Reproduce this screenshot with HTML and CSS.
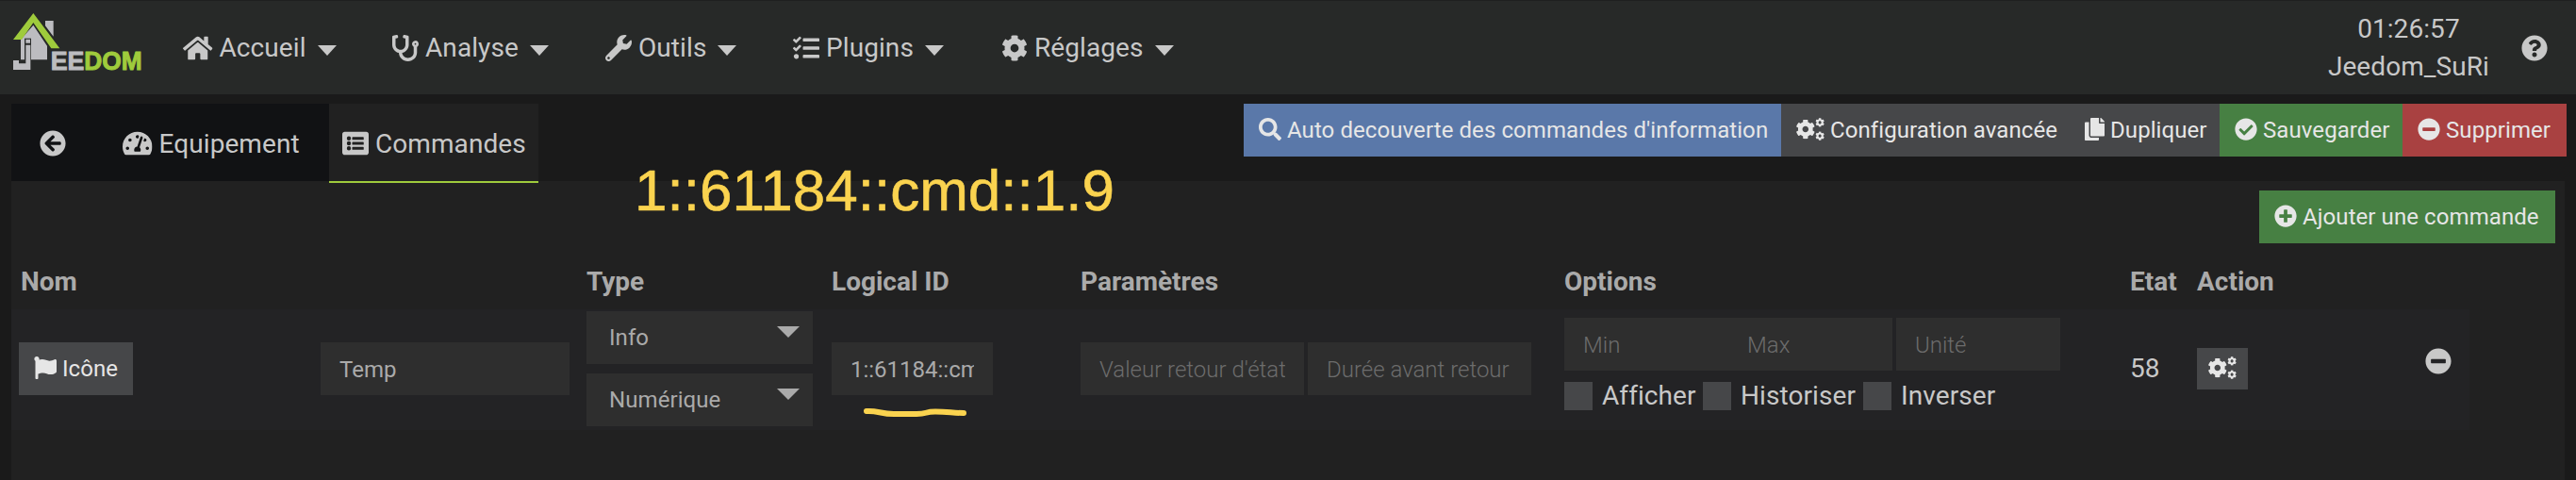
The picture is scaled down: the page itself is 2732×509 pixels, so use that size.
FILE: index.html
```
<!DOCTYPE html>
<html lang="fr">
<head>
    <meta charset="UTF-8">
    <meta name="viewport" content="width=device-width, initial-scale=1.0">
    <title>Jeedom - Commandes</title>
    <link rel="stylesheet" href="styles.css">
</head>
<body>
    <!-- icons -->
    <svg class="sprite" width="0" height="0">
        <symbol id="home" viewBox="0 0 576 512"><path d="M280.37 148.26L96 300.11V464a16 16 0 0 0 16 16l112.06-.29a16 16 0 0 0 15.92-16V368a16 16 0 0 1 16-16h64a16 16 0 0 1 16 16v95.64a16 16 0 0 0 16 16.05L464 480a16 16 0 0 0 16-16V300L295.67 148.26a12.19 12.19 0 0 0-15.3 0zM571.6 251.47L488 182.56V44.05a12 12 0 0 0-12-12h-56a12 12 0 0 0-12 12v72.61L318.47 43a48 48 0 0 0-61 0L4.34 251.47a12 12 0 0 0-1.6 16.9l25.5 31A12 12 0 0 0 45.15 301l235.22-193.74a12.19 12.19 0 0 1 15.3 0L530.9 301a12 12 0 0 0 16.9-1.6l25.5-31a12 12 0 0 0-1.7-16.93z"/></symbol>
        <symbol id="stethoscope" viewBox="0 0 512 512"><path d="M447.1 112c-34.2.5-62.3 28.4-63 62.6-.5 24.3 12.5 45.6 32 56.8V344c0 57.3-50.2 104-112 104-60 0-109.2-44.1-111.9-99.2C265 333.8 320 269.2 320 192V36.6c0-11.4-8.1-21.3-19.3-23.5L237.8.5c-13-2.6-25.6 5.8-28.2 18.8L206.4 35c-2.6 13 5.8 25.6 18.8 28.2l30.7 6.1v121.4c0 52.9-42.2 96.7-95.1 97.2-53.4.5-96.9-42.7-96.9-96V69.4l30.7-6.1c13-2.6 21.4-15.2 18.8-28.2l-3.1-15.7C107.7 6.4 95.1-2 82.1.6L19.3 13C8.1 15.3 0 25.1 0 36.6V192c0 77.3 55.1 142 128.1 156.8C130.7 439.2 208.6 512 304 512c97 0 176-75.4 176-168V231.4c19.1-11.1 32-31.7 32-55.4 0-35.7-29.2-64.5-64.9-64zm.9 80c-8.8 0-16-7.2-16-16s7.2-16 16-16 16 7.2 16 16-7.2 16-16 16z"/></symbol>
        <symbol id="wrench" viewBox="0 0 512 512"><path d="M507.73 109.1c-2.24-9.03-13.54-12.09-20.12-5.51l-74.36 74.36-67.88-11.31-11.31-67.88 74.36-74.36c6.62-6.62 3.43-17.9-5.66-20.16-47.38-11.74-99.55.91-136.58 37.93-39.64 39.64-50.55 97.1-34.05 147.2L18.74 402.76c-24.99 24.99-24.99 65.51 0 90.5 24.99 24.99 65.51 24.99 90.5 0l213.21-213.21c50.12 16.71 107.47 5.68 147.37-34.22 37.07-37.07 49.7-89.32 37.91-136.73zM64 472c-13.25 0-24-10.75-24-24 0-13.26 10.75-24 24-24s24 10.74 24 24c0 13.25-10.75 24-24 24z"/></symbol>
        <symbol id="tasks" viewBox="0 0 512 512"><path d="M139.61 35.5a12 12 0 0 0-17 0L58.93 98.81l-22.7-22.12a12 12 0 0 0-17 0L3.53 92.41a12 12 0 0 0 0 17l47.59 47.4a12.78 12.78 0 0 0 17.61 0l15.59-15.62L156.52 69a12.09 12.09 0 0 0 .09-17zm0 159.19a12 12 0 0 0-17 0l-63.68 63.72-22.7-22.1a12 12 0 0 0-17 0L3.53 252a12 12 0 0 0 0 17L51 316.5a12.77 12.77 0 0 0 17.6 0l15.7-15.69 72.2-72.22a12 12 0 0 0 .09-16.9zM64 368c-26.49 0-48.59 21.5-48.59 48S37.53 464 64 464a48 48 0 0 0 0-96zm432 16H208a16 16 0 0 0-16 16v32a16 16 0 0 0 16 16h288a16 16 0 0 0 16-16v-32a16 16 0 0 0-16-16zm0-320H208a16 16 0 0 0-16 16v32a16 16 0 0 0 16 16h288a16 16 0 0 0 16-16V80a16 16 0 0 0-16-16zm0 160H208a16 16 0 0 0-16 16v32a16 16 0 0 0 16 16h288a16 16 0 0 0 16-16v-32a16 16 0 0 0-16-16z"/></symbol>
        <symbol id="cog" viewBox="0 0 512 512"><path d="M487.4 315.7l-42.6-24.6c4.3-23.2 4.3-47 0-70.2l42.6-24.6c4.9-2.8 7.1-8.6 5.5-14-11.1-35.6-30-67.8-54.7-94.6-3.8-4.1-10-5.1-14.8-2.3L380.8 110c-17.9-15.4-38.5-27.3-60.8-35.1V25.8c0-5.6-3.9-10.5-9.4-11.7-36.7-8.2-74.3-7.8-109.2 0-5.5 1.2-9.4 6.1-9.4 11.7V75c-22.2 7.9-42.8 19.8-60.8 35.1L88.7 85.5c-4.9-2.8-11-1.9-14.8 2.3-24.7 26.7-43.6 58.9-54.7 94.6-1.7 5.4.6 11.2 5.5 14L67.3 221c-4.3 23.2-4.3 47 0 70.2l-42.6 24.6c-4.9 2.8-7.1 8.6-5.5 14 11.1 35.6 30 67.8 54.7 94.6 3.8 4.1 10 5.1 14.8 2.3l42.6-24.6c17.9 15.4 38.5 27.3 60.8 35.1v49.2c0 5.6 3.9 10.5 9.4 11.7 36.7 8.2 74.3 7.8 109.2 0 5.5-1.2 9.4-6.1 9.4-11.7v-49.2c22.2-7.9 42.8-19.8 60.8-35.1l42.6 24.6c4.9 2.8 11 1.9 14.8-2.3 24.7-26.7 43.6-58.9 54.7-94.6 1.5-5.5-.7-11.3-5.6-14.1zM256 336c-44.1 0-80-35.9-80-80s35.9-80 80-80 80 35.9 80 80-35.9 80-80 80z"/></symbol>
        <symbol id="cogs" viewBox="0 0 640 512"><use href="#cog" x="-14" y="33" width="446" height="446"/><use href="#cog" x="432" y="0" width="208" height="208"/><use href="#cog" x="432" y="304" width="208" height="208"/></symbol>
        <symbol id="question" viewBox="0 0 512 512"><path d="M504 256c0 136.997-111.043 248-248 248S8 392.997 8 256C8 119.083 119.043 8 256 8s248 111.083 248 248zM262.655 90c-54.497 0-89.255 22.957-116.549 63.758-3.536 5.286-2.353 12.415 2.715 16.258l34.699 26.31c5.205 3.947 12.621 3.008 16.665-2.122 17.864-22.658 30.113-35.797 57.303-35.797 20.429 0 45.698 13.148 45.698 32.958 0 14.976-12.363 22.667-32.534 33.976C247.128 238.528 216 254.941 216 296v4c0 6.627 5.373 12 12 12h56c6.627 0 12-5.373 12-12v-1.333c0-28.462 83.186-29.647 83.186-106.667 0-58.002-60.165-102-116.531-102zM256 338c-25.365 0-46 20.635-46 46 0 25.364 20.635 46 46 46s46-20.636 46-46c0-25.365-20.635-46-46-46z"/></symbol>
        <symbol id="arrow-left" viewBox="0 0 512 512"><path d="M256 504C119 504 8 393 8 256S119 8 256 8s248 111 248 248-111 248-248 248zm28.9-143.6L209.4 288H392c13.3 0 24-10.7 24-24v-16c0-13.3-10.7-24-24-24H209.4l75.5-72.4c9.7-9.3 9.9-24.8.4-34.3l-11-10.9c-9.4-9.4-24.6-9.4-33.9 0L107.7 239c-9.4 9.4-9.4 24.6 0 33.9l132.7 132.7c9.4 9.4 24.6 9.4 33.9 0l11-10.9c9.5-9.5 9.3-25-.4-34.3z"/></symbol>
        <symbol id="tachometer" viewBox="0 0 576 512"><path d="M288 32C128.94 32 0 160.94 0 320c0 52.8 14.25 102.26 39.06 144.8 5.61 9.62 16.3 15.2 27.44 15.2h443c11.14 0 21.83-5.58 27.44-15.2C561.75 422.26 576 372.8 576 320c0-159.06-128.94-288-288-288zm0 64c14.71 0 26.58 10.13 30.32 23.65-1.11 2.26-2.64 4.23-3.45 6.67l-9.22 27.67c-5.13 3.49-10.97 6.01-17.64 6.01-17.67 0-32-14.33-32-32S270.33 96 288 96zM96 384c-17.67 0-32-14.33-32-32s14.33-32 32-32 32 14.33 32 32-14.33 32-32 32zm48-160c-17.67 0-32-14.33-32-32s14.33-32 32-32 32 14.33 32 32-14.33 32-32 32zm246.77-72.41l-61.33 184C343.13 347.33 352 364.54 352 384c0 11.72-3.38 22.55-8.88 32H232.88c-5.5-9.45-8.88-20.28-8.88-32 0-33.94 26.5-61.43 59.9-63.59l61.34-184.01c4.17-12.56 17.73-19.45 30.36-15.17 12.57 4.19 19.35 17.79 15.17 30.36zm14.66 57.2l15.52-46.55c3.47-1.29 7.13-2.23 11.05-2.23 17.67 0 32 14.33 32 32s-14.33 32-32 32c-11.38-.01-20.89-6.28-26.57-15.22zM480 384c-17.67 0-32-14.33-32-32s14.33-32 32-32 32 14.33 32 32-14.33 32-32 32z"/></symbol>
        <symbol id="list-alt" viewBox="0 0 512 512"><path fill-rule="evenodd" d="M464 480H48c-26.51 0-48-21.49-48-48V80c0-26.51 21.49-48 48-48h416c26.51 0 48 21.49 48 48v352c0 26.51-21.49 48-48 48zM128 120a40 40 0 1 0 0 80 40 40 0 1 0 0-80zM128 216a40 40 0 1 0 0 80 40 40 0 1 0 0-80zM128 312a40 40 0 1 0 0 80 40 40 0 1 0 0-80zM204 132h200q12 0 12 12v32q0 12-12 12H204q-12 0-12-12v-32q0-12 12-12zM204 228h200q12 0 12 12v32q0 12-12 12H204q-12 0-12-12v-32q0-12 12-12zM204 324h200q12 0 12 12v32q0 12-12 12H204q-12 0-12-12v-32q0-12 12-12z"/></symbol>
        <symbol id="search" viewBox="0 0 512 512"><path d="M505 442.7L405.3 343c-4.5-4.5-10.6-7-17-7H372c27.6-35.3 44-79.7 44-128C416 93.1 322.9 0 208 0S0 93.1 0 208s93.1 208 208 208c48.3 0 92.7-16.4 128-44v16.3c0 6.4 2.5 12.5 7 17l99.7 99.7c9.4 9.4 24.6 9.4 33.9 0l28.3-28.3c9.4-9.4 9.4-24.6.1-34zM208 336c-70.7 0-128-57.2-128-128 0-70.7 57.2-128 128-128 70.7 0 128 57.2 128 128 0 70.7-57.2 128-128 128z"/></symbol>
        <symbol id="copy" viewBox="0 0 448 512"><path d="M320 448v40c0 13.255-10.745 24-24 24H24c-13.255 0-24-10.745-24-24V120c0-13.255 10.745-24 24-24h72v296c0 30.879 25.121 56 56 56h168zm0-344V0H152c-13.255 0-24 10.745-24 24v368c0 13.255 10.745 24 24 24h272c13.255 0 24-10.745 24-24V128H344c-13.2 0-24-10.8-24-24zm120.971-31.029L375.029 7.029A24 24 0 0 0 358.059 0H352v96h96v-6.059a24 24 0 0 0-7.029-16.97z"/></symbol>
        <symbol id="check" viewBox="0 0 512 512"><path d="M504 256c0 136.967-111.033 248-248 248S8 392.967 8 256 119.033 8 256 8s248 111.033 248 248zM227.314 387.314l184-184c6.248-6.248 6.248-16.379 0-22.627l-22.627-22.627c-6.248-6.249-16.379-6.249-22.628 0L216 308.118l-70.059-70.059c-6.248-6.248-16.379-6.248-22.628 0l-22.627 22.627c-6.248 6.248-6.248 16.379 0 22.627l104 104c6.249 6.249 16.379 6.249 22.628.001z"/></symbol>
        <symbol id="minus" viewBox="0 0 512 512"><path d="M256 8C119 8 8 119 8 256s111 248 248 248 248-111 248-248S393 8 256 8zM124 296c-6.6 0-12-5.4-12-12v-56c0-6.6 5.4-12 12-12h264c6.6 0 12 5.4 12 12v56c0 6.6-5.4 12-12 12H124z"/></symbol>
        <symbol id="plus" viewBox="0 0 512 512"><path d="M256 8C119 8 8 119 8 256s111 248 248 248 248-111 248-248S393 8 256 8zm144 276c0 6.6-5.4 12-12 12h-92v92c0 6.6-5.4 12-12 12h-56c-6.6 0-12-5.4-12-12v-92h-92c-6.6 0-12-5.4-12-12v-56c0-6.6 5.4-12 12-12h92v-92c0-6.6 5.4-12 12-12h56c6.6 0 12 5.4 12 12v92h92c6.6 0 12 5.4 12 12v56z"/></symbol>
        <symbol id="flag" viewBox="0 0 512 512"><path d="M349.565 98.783C295.978 98.783 251.721 64 184.348 64c-24.955 0-47.309 4.384-68.045 12.013a55.947 55.947 0 0 0 3.586-23.562C118.117 24.015 94.806 1.206 66.338.048 34.345-1.254 8 24.296 8 56c0 19.026 9.497 35.825 24 45.945V488c0 13.255 10.745 24 24 24h16c13.255 0 24-10.745 24-24v-94.4c28.311-12.064 63.582-22.122 114.435-22.122 53.588 0 97.844 34.783 165.217 34.783 48.169 0 86.667-16.294 122.505-40.858C506.84 359.452 512 349.571 512 339.045v-243.1c0-23.393-24.269-38.87-45.485-29.016-34.338 15.948-76.454 31.854-116.95 31.854z"/></symbol>
    </svg>

    <header class="navbar">
        <svg class="logo" viewBox="0 0 450 216">
            <path class="logo-gray" d="M120 42h26v50l-26-34zM82 56l44 66v44H42v-64z"/>
            <path class="logo-dark" d="M54 98h21v70H54z"/>
            <path class="logo-gray" d="M58 101h14v12H58zM58 119h15v79H18v-30h18v10h22z"/>
            <path class="logo-green" d="M82 18l84 112h-27L82 48l-37 54H18z"/>
            <text class="logo-gray" x="137" y="197" textLength="107" lengthAdjust="spacingAndGlyphs">EE</text>
            <text class="logo-green" x="244" y="197" textLength="184" lengthAdjust="spacingAndGlyphs">DOM</text>
        </svg>
        <nav class="menu">
            <a class="menu-accueil"><svg class="icon wide"><use href="#home"/></svg>Accueil<i class="caret"></i></a>
            <a class="menu-analyse"><svg class="icon"><use href="#stethoscope"/></svg>Analyse<i class="caret"></i></a>
            <a class="menu-outils"><svg class="icon"><use href="#wrench"/></svg>Outils<i class="caret"></i></a>
            <a class="menu-plugins"><svg class="icon"><use href="#tasks"/></svg>Plugins<i class="caret"></i></a>
            <a class="menu-reglages"><svg class="icon"><use href="#cog"/></svg>Réglages<i class="caret"></i></a>
        </nav>
        <div class="clock">
            <div>01:26:57</div>
            <div>Jeedom_SuRi</div>
        </div>
        <svg class="icon help"><use href="#question"/></svg>
    </header>

    <div class="toolbar">
        <div class="tabs">
            <a class="tab tab-back"><svg class="icon"><use href="#arrow-left"/></svg></a>
            <a class="tab tab-equip"><svg class="icon wide"><use href="#tachometer"/></svg>Equipement</a>
            <a class="tab tab-cmd active"><svg class="icon"><use href="#list-alt"/></svg>Commandes</a>
        </div>
        <div class="actions">
            <button class="btn btn-info"><svg class="icon"><use href="#search"/></svg>Auto decouverte des commandes d'information</button>
            <button class="btn btn-config"><svg class="icon cogs"><use href="#cogs"/></svg>Configuration avancée</button>
            <button class="btn btn-copy"><svg class="icon narrow"><use href="#copy"/></svg>Dupliquer</button>
            <button class="btn btn-save"><svg class="icon"><use href="#check"/></svg>Sauvegarder</button>
            <button class="btn btn-delete"><svg class="icon"><use href="#minus"/></svg>Supprimer</button>
        </div>
    </div>

    <main class="panel">
        <div class="add">
            <button class="btn btn-add"><svg class="icon"><use href="#plus"/></svg>Ajouter une commande</button>
        </div>
        <div class="row head">
            <div class="nom">Nom</div>
            <div>Type</div>
            <div>Logical ID</div>
            <div>Paramètres</div>
            <div>Options</div>
            <div>Etat</div>
            <div>Action</div>
        </div>
        <div class="row cmd">
            <div class="cell name">
                <button class="btn btn-icon"><svg class="icon"><use href="#flag"/></svg>Icône</button>
                <input class="field field-name" type="text" value="Temp">
            </div>
            <div class="types">
                <div class="select">Info<i class="caret"></i></div>
                <div class="select">Numérique<i class="caret"></i></div>
            </div>
            <div class="cell">
                <input class="field field-id" type="text" value="1::61184::cmd::1.9">
            </div>
            <div class="cell params">
                <input class="field" type="text" placeholder="Valeur retour d'état">
                <input class="field" type="text" placeholder="Durée avant retour">
            </div>
            <div class="options">
                <div class="limits">
                    <input class="field" type="text" placeholder="Min">
                    <input class="field" type="text" placeholder="Max">
                    <input class="field unit" type="text" placeholder="Unité">
                </div>
                <div class="checks">
                    <label class="check check-show"><i class="box"></i>Afficher</label>
                    <label class="check check-hist"><i class="box"></i>Historiser</label>
                    <label class="check"><i class="box"></i>Inverser</label>
                </div>
            </div>
            <div class="cell state">58</div>
            <div class="cell action">
                <button class="btn btn-cogs"><svg class="icon cogs"><use href="#cogs"/></svg></button>
                <svg class="icon remove"><use href="#minus"/></svg>
            </div>
        </div>
    </main>

    <!-- notes drawn over the page -->
    <div class="note">1::61184::cmd::1.9</div>
    <svg class="stroke" viewBox="0 0 112 18"><path d="M5 6C16 5 20 9 34 9h24c12 0 8-2.5 20-2.5 14 0 18 1.500 30 1.500"/></svg>
</body>
</html>
```
FILE: styles.css
```
* {
    box-sizing: border-box;
}

body {
    margin: 0;
    height: 509px;
    overflow: hidden;
    position: relative;
    background-color: #1a1a1a;
    color: #c8c8c8;
    font-family: Roboto, sans-serif;
    font-size: 28px;
    line-height: 40px;
    letter-spacing: .08px;
}

.sprite {
    position: absolute;
}

.icon {
    width: 1em;
    height: 1em;
    margin-right: .25em;
    fill: currentColor;
    flex: none;
}

.icon.wide {
    width: 1.125em;
}

.icon.narrow {
    width: .875em;
}

.icon.cogs {
    width: 1.25em;
}

.caret {
    border: 10px solid transparent;
    border-top: 11px solid currentColor;
    border-bottom: 0;
}

/* navbar */
.navbar {
    height: 100px;
    display: flex;
    align-items: center;
    background-color: #272928;
    border-top: 1px solid #1f2020;
}

.logo {
    width: 150px;
    height: 72px;
    margin: -13px 36px 0 8px;
    font-family: "Liberation Sans", Arial, sans-serif;
    font-weight: bold;
    font-size: 84px;
    letter-spacing: 0;
}

.logo text {
    stroke: currentColor;
    stroke-width: 3;
}

.logo-gray {
    fill: #bcbcc0;
    color: #bcbcc0;
}

.logo-green {
    fill: #9fcb3c;
    color: #9fcb3c;
}

.logo-dark {
    fill: #272928;
}

.menu {
    display: flex;
    flex: 1;
}

.menu a {
    display: flex;
    align-items: center;
}

.menu .caret {
    margin: 6px 0 0 12px;
}

.menu-accueil {
    width: 222px;
}

.menu-analyse {
    width: 226px;
}

.menu-outils {
    width: 199px;
}

.menu-plugins {
    width: 221px;
}

.clock {
    text-align: center;
}

.help {
    margin: 0 30px 0 34px;
}

/* tabs and buttons */
.toolbar {
    height: 92px;
    padding: 10px 10px 0 12px;
    display: flex;
    justify-content: space-between;
    align-items: flex-start;
}

.tabs {
    display: flex;
    height: 84px;
}

.tab {
    display: flex;
    align-items: center;
    height: 82px;
    padding-top: 3px;
    background-color: #111214;
}

.tab .icon {
    margin-top: -2px;
}

.tab-back {
    width: 88px;
    padding-left: 30px;
}

.tab-equip {
    width: 249px;
    padding-left: 30px;
}

.tab-cmd {
    width: 222px;
    padding-left: 14px;
}

.tab.active {
    height: 84px;
    background-color: #212121;
    border-bottom: 2px solid #9fcb3c;
}

.actions {
    display: flex;
}

.btn {
    display: flex;
    align-items: center;
    height: 56px;
    padding: 0 0 0 16px;
    border: none;
    background-color: #464749;
    color: #e6e6e6;
    font-family: inherit;
    font-size: 24px;
    letter-spacing: inherit;
    white-space: nowrap;
}

.btn .icon {
    margin-top: -2px;
}

.btn-info {
    width: 570px;
    background-color: #5a78a9;
}

.btn-config {
    width: 306px;
}

.btn-copy {
    width: 159px;
}

.btn-save {
    width: 194px;
    background-color: #478043;
}

.btn-delete {
    width: 174px;
    background-color: #a94141;
}

/* commands */
.panel {
    height: 317px;
    margin: 0 12px;
    padding-top: 10px;
    background-color: #212121;
}

.add {
    display: flex;
    justify-content: flex-end;
    padding-right: 10px;
}

.btn-add {
    width: 314px;
    background-color: #478043;
}

.row {
    display: grid;
    grid-template-columns: 610px 260px 264px 513px 600px 71px 289px;
    width: 2607px;
}

.head {
    height: 58px;
    margin-top: 12px;
    line-height: 58px;
    font-weight: bold;
    letter-spacing: 0;
    color: #aaa;
}

.nom {
    padding-left: 10px;
}

.cmd {
    height: 128px;
    background-color: #232325;
}

.cell {
    display: flex;
    align-items: center;
    padding-bottom: 2px;
}

.name {
    justify-content: space-between;
    padding-left: 8px;
    padding-right: 18px;
}

.btn-icon {
    width: 121px;
}

.field {
    height: 56px;
    min-width: 0;
    padding: 2px 20px 0;
    border: none;
    border-radius: 0;
    background-color: #2e2e2e;
    color: #aaa;
    font-family: inherit;
    font-size: 24px;
}

.field::placeholder {
    color: #6c6c6c;
    font-weight: 300;
}

.field-name {
    width: 264px;
}

.field-id {
    width: 171px;
}

.types {
    display: flex;
    flex-direction: column;
    gap: 10px;
    padding-top: 2px;
}

.select {
    display: flex;
    align-items: center;
    justify-content: space-between;
    width: 240px;
    height: 56px;
    padding: 0 14px 0 24px;
    background-color: #2e2e2e;
    color: #aaa;
    font-size: 24px;
}

.select .caret {
    border-width: 12px 12px 0;
    margin-top: -12px;
}

.params {
    gap: 4px;
}

.params .field {
    width: 237px;
}

.options {
    padding-top: 9px;
}

.limits {
    display: flex;
}

.limits .field {
    width: 174px;
}

.limits .unit {
    margin-left: 4px;
}

.checks {
    display: flex;
    margin-top: 12px;
    height: 30px;
}

.check {
    display: flex;
    align-items: center;
}

.check-show {
    width: 147px;
}

.check-hist {
    width: 170px;
}

.box {
    width: 30px;
    height: 30px;
    margin-right: 10px;
    background-color: #464749;
}

.btn-cogs {
    width: 54px;
    height: 44px;
    padding-left: 12px;
}

.action {
    justify-content: space-between;
    padding-right: 19px;
}

.remove {
    margin: -17px 0 0;
}

/* notes */
.note {
    position: absolute;
    left: 673px;
    top: 171px;
    color: #fad34f;
    font-family: "Liberation Sans", Arial, sans-serif;
    font-size: 62px;
    line-height: 62px;
    letter-spacing: 0;
    -webkit-text-stroke: .6px #fad34f;
}

.stroke {
    position: absolute;
    left: 914px;
    top: 430px;
    width: 112px;
    height: 18px;
    fill: none;
    stroke: #fad34f;
    stroke-width: 6;
    stroke-linecap: round;
}
```
